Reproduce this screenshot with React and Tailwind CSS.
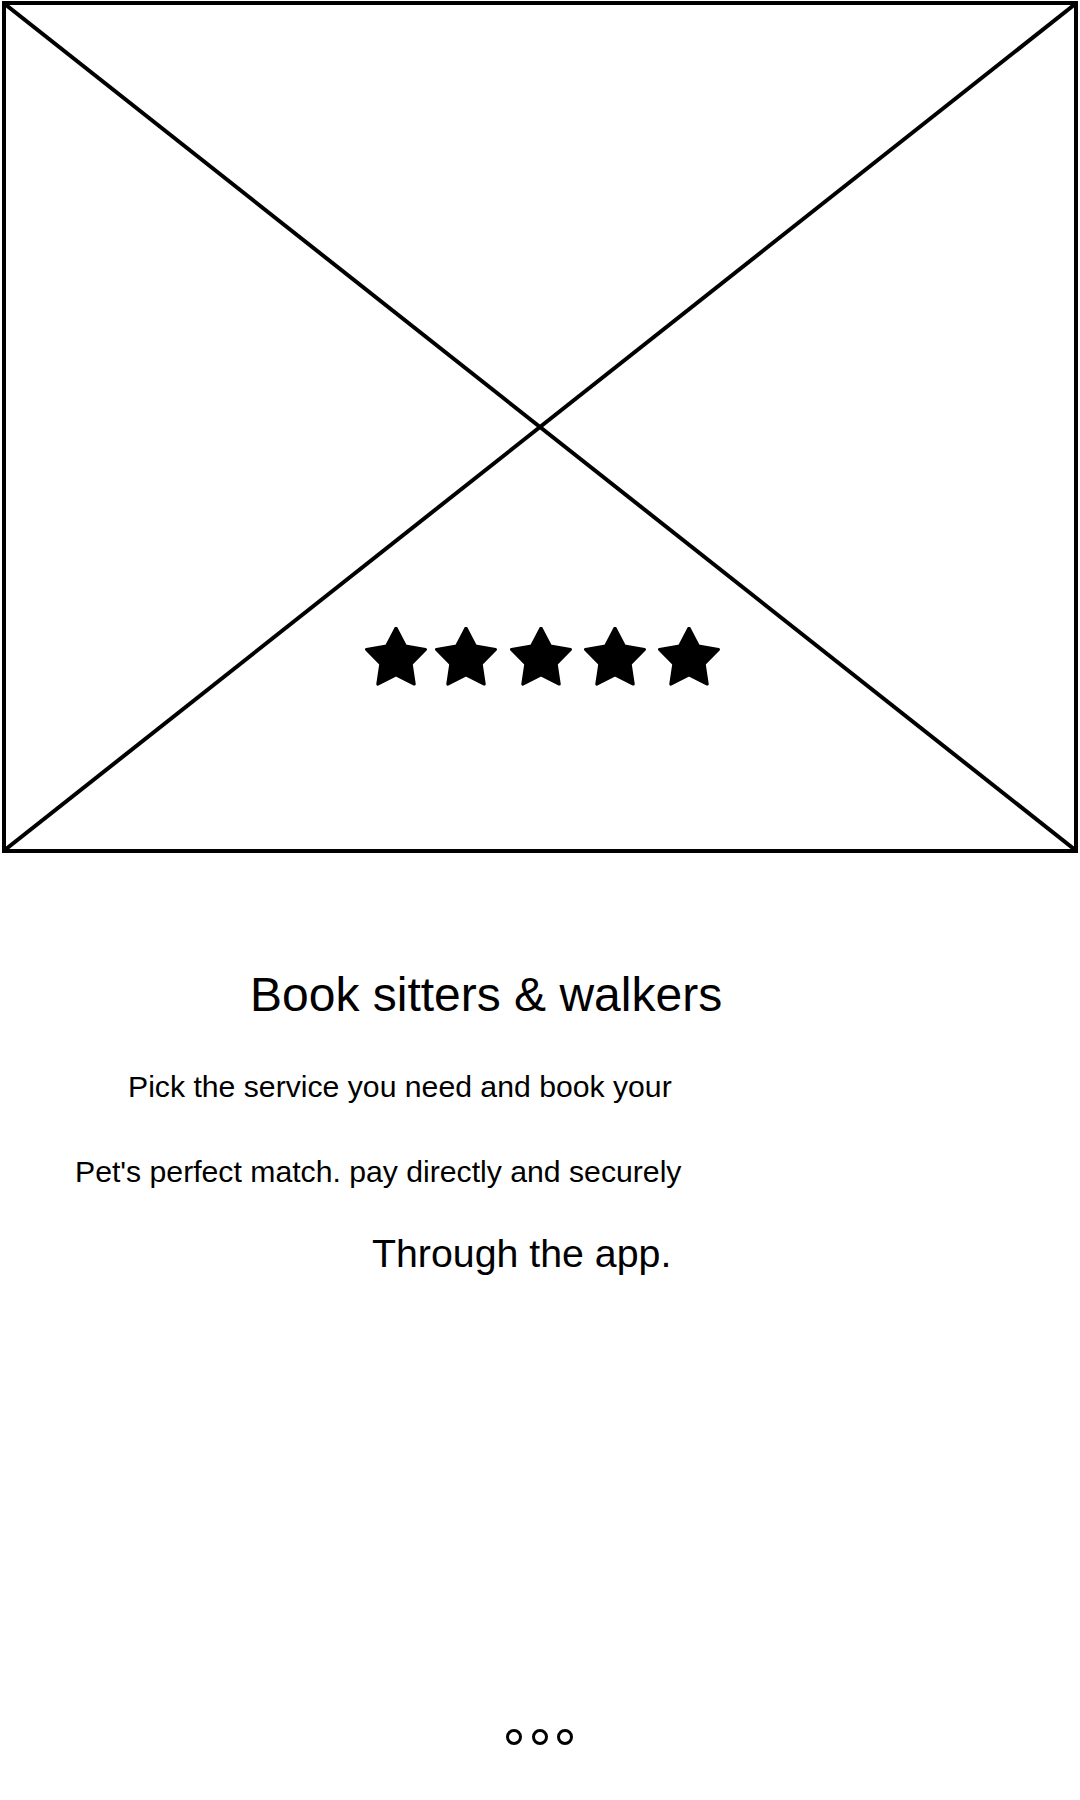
import React from "react";

function Star() {
  const R = 31;
  const r = 16;
  const pts = [];
  for (let i = 0; i < 10; i++) {
    const a = ((-90 + i * 36) * Math.PI) / 180;
    const rad = i % 2 === 0 ? R : r;
    pts.push(`${(rad * Math.cos(a)).toFixed(2)},${(rad * Math.sin(a)).toFixed(2)}`);
  }
  return (
    <svg width="62" height="60" viewBox="-31 -32 62 60" className="block shrink-0">
      <polygon points={pts.join(" ")} fill="#000" stroke="#000" strokeWidth="3" strokeLinejoin="round" />
    </svg>
  );
}

export default function App() {
  return (
    <div
      className="w-[1080px] h-[1800px] bg-white text-black overflow-hidden"
      style={{ fontFamily: '"Liberation Sans", Arial, sans-serif' }}
    >
      <div className="relative ml-[2px] mt-[1px] w-[1076px] h-[852px] border-4 border-black">
        <svg className="absolute inset-0" width="1068" height="844" viewBox="0 0 1068 844">
          <line x1="0" y1="0" x2="1068" y2="844" stroke="#000" strokeWidth="4" />
          <line x1="1068" y1="0" x2="0" y2="844" stroke="#000" strokeWidth="4" />
        </svg>
        <div className="relative flex pt-[622px]">
          <div className="ml-[359px]"><Star /></div>
          <div className="ml-[8px]"><Star /></div>
          <div className="ml-[13px]"><Star /></div>
          <div className="ml-[12px]"><Star /></div>
          <div className="ml-[12px]"><Star /></div>
        </div>
      </div>

      <div className="mt-[118px] pl-[250px] text-[48px] leading-none whitespace-nowrap">
        Book sitters &amp; walkers
      </div>
      <div className="mt-[53px] pl-[128px] text-[30.2px] leading-none whitespace-nowrap">
        Pick the service you need and book your
      </div>
      <div className="mt-[55px] pl-[75px] text-[30.2px] leading-none whitespace-nowrap">
        Pet's perfect match. pay directly and securely
      </div>
      <div className="mt-[47px] pl-[372px] text-[39.3px] leading-none whitespace-nowrap">
        Through the app.
      </div>

      <div className="mt-[455px] pl-[506px] flex gap-[9.5px]">
        <div className="w-[16px] h-[16px] rounded-full border-[3px] border-black" />
        <div className="w-[16px] h-[16px] rounded-full border-[3px] border-black" />
        <div className="w-[16px] h-[16px] rounded-full border-[3px] border-black" />
      </div>
    </div>
  );
}
